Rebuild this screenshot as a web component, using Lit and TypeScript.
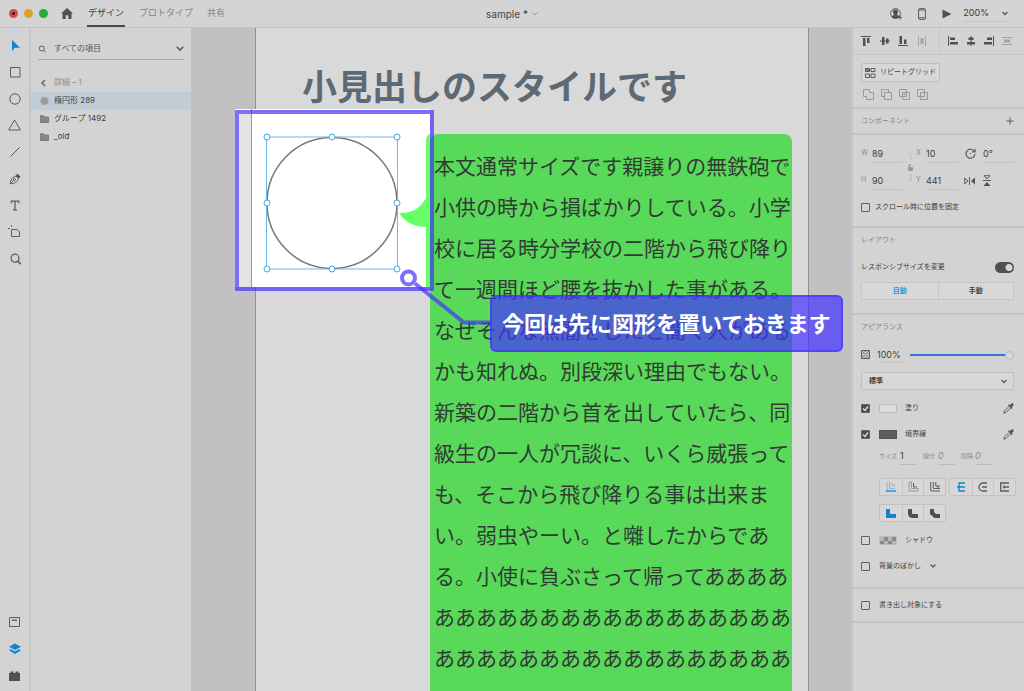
import { LitElement, html, svg, css } from "lit";
import { customElement, property, state } from "lit/decorators.js";
import { classMap } from "lit/directives/class-map.js";

const shared = css`
  :host, * { box-sizing: border-box; }
  button, input, select {
    font: inherit; color: inherit; background: none; border: 0;
    margin: 0; padding: 0; outline: 0; border-radius: 0; min-width: 0;
  }
  button { display: flex; align-items: center; justify-content: center; }
  svg { display: block; fill: none; stroke: #5c5c5c; stroke-width: 1; flex: none; overflow: visible; }
  .solid { fill: #505050; stroke: none; }
  .blue { stroke: #1682d0; }
  .bluefill { fill: #1380d0; stroke: none; }
  .pale { stroke: #999; }
`;

const icon = (w: number, h: number, body: unknown, cls = "") =>
  html`<svg class=${cls} width=${w} height=${h} viewBox="0 0 ${w} ${h}" aria-hidden="true">${body}</svg>`;

const chevron = icon(8, 5, svg`<path stroke-width="1.4" d="M1.500 1 4 3.500 6.500 1"/>`);

const tools: [string, unknown][] = [
  ["選択", icon(12, 12, svg`<path class="bluefill" d="M3 1v11l2.700-3.200H11z"/>`)],
  ["長方形", icon(12, 12, svg`<path d="M1.500 1.500h9.500v9.500H1.500z"/>`)],
  ["楕円形", icon(12, 12, svg`<circle cx="6" cy="6" r="5.200"/>`)],
  ["多角形", icon(13, 12, svg`<path d="M6.500 1 12.300 11H.700z"/>`)],
  ["線", icon(12, 12, svg`<path d="m1.500 10.500 9-9"/>`)],
  ["ペン", icon(12, 12, svg`<path d="M1.300 10.800C1.500 7 2.500 4.500 7 3l2.400 2.400C8.500 9 6 10.500 1.300 10.800l3.800-3.900"/><circle cx="5.500" cy="6.500" r="1"/><path class="solid" d="m6.800 2.300 1.600-1.500 3 3-1.600 1.600z"/>`)],
  ["テキスト", icon(10, 11, svg`<path stroke-width="1.200" d="M1.200 3.200V1.200h7.600v2M5 1.200v8.600M3 9.900h4"/>`)],
  ["アートボード", icon(13, 13, svg`<path d="M3.500 4.500H9l2.500 2.500v4.500h-8zM3.500 0v2M0 3.500h2"/>`)],
  ["ズーム", icon(12, 12, svg`<circle stroke-width="1.200" cx="6" cy="5.200" r="4"/><path stroke-width="1.600" d="m8.800 8.100 2.900 3"/>`)],
];

const docks: [string, unknown][] = [
  ["ライブラリ", icon(11, 10, svg`<path d="M.500.500h10v9H.500z"/><path stroke-width="1.400" d="M3 3.200h5"/>`)],
  ["レイヤー", icon(12, 12, svg`<path class="bluefill" d="m6 .500 6 3.300-6 3.300-6-3.300zM0 7.300l2-1.100 4 2.200 4-2.200 2 1.100-6 3.700z"/>`)],
  ["プラグイン", icon(11, 10, svg`<path class="solid" d="M0 2h1.500V.500h3V2h2V.500h3V2H11v8H0z"/>`)],
];

@customElement("tool-bar")
class ToolBar extends LitElement {
  static styles = [shared, css`
    :host { display: flex; flex-direction: column; justify-content: space-between; padding: 4px 0 2px; border-right: 2px solid #c6c6c6; background: #d3d3d3; }
    .group { display: grid; grid-auto-rows: 1fr; height: 240px; }
    .dock { height: 80px; }
    button { width: 100%; }
  `];
  render() {
    const draw = ([label, glyph]: [string, unknown]) => html`<button aria-label=${label}>${glyph}</button>`;
    return html`<div class="group">${tools.map(draw)}</div><div class="group dock">${docks.map(draw)}</div>`;
  }
}

@customElement("app-header")
class AppHeader extends LitElement {
  static styles = [shared, css`
    :host { display: grid; grid-template-columns: 1fr auto 1fr; align-items: center; height: 28px; padding: 0 9px; background: #d4d4d4; border-bottom: 1px solid #c1c1c1; font-size: 9px; }
    .side { display: flex; align-items: center; height: 27px; }
    .dot { width: 9px; height: 9px; border-radius: 50%; margin-right: 6px; }
    .red { background: radial-gradient(#4a0d0d 0 1px, #d84b4b 2px); }
    .amber { background: #daa328; }
    .green { background: #22ad38; }
    .home { margin: 0 14px 0 7px; }
    nav { display: flex; gap: 14px; align-self: stretch; }
    nav a { display: flex; align-items: center; color: #858585; text-decoration: none; border: solid transparent; border-width: 2px 0; }
    nav a.on { color: #3c3c3c; border-bottom-color: #4b4b4b; padding: 0 1px; }
    .title { display: flex; align-items: center; gap: 4px; color: #444; font-size: 10px; }
    .right { justify-content: flex-end; gap: 16px; padding-right: 6px; }
    .zoom { display: flex; gap: 12px; height: 16px; margin-left: -5px; border-bottom: 1px solid #c3c3c3; color: #3c3c3c; }
  `];
  render() {
    return html`
      <div class="side">
        <button class="dot red" aria-label="閉じる"></button>
        <button class="dot amber" aria-label="最小化"></button>
        <button class="dot green" aria-label="拡大"></button>
        <button class="home" aria-label="ホーム">${icon(12, 11, svg`<path class="solid" d="M6 0 12 5.500H10.500V11H7.300V7.200H4.700V11H1.500V5.500H0z"/>`)}</button>
        <nav>
          <a class="on" href="#design">デザイン</a><a href="#prototype">プロトタイプ</a><a href="#share">共有</a>
        </nav>
      </div>
      <div class="title">sample * ${icon(6, 4, svg`<path d="M.500.500 3 3 5.500.500"/>`, "pale")}</div>
      <div class="side right">
        <button aria-label="招待">${icon(12, 12, svg`<circle cx="5.500" cy="5.500" r="4.900"/><path class="solid" d="M5.500 1.500c3.200 0 2.900 3.500 1.500 4.700 0 1.200 1.800 1 2.500 2.200C7.500 11.300 3.500 11.300 1.500 8.700 2 7.300 4 7.500 4 6.200 2.600 5 2.300 1.500 5.500 1.500z"/><path stroke-width="1.200" d="M10 7.500v4M8 9.500h4"/>`)}</button>
        <button aria-label="デバイスでプレビュー">${icon(8, 12, svg`<rect x=".6" y=".6" width="6.800" height="10.800" rx="1"/><path d="M.500 2h7M.500 9.800h7"/>`)}</button>
        <button aria-label="再生">${icon(10, 10, svg`<path class="solid" d="M.500.500 9.500 5l-9 4.500z"/>`)}</button>
        <button class="zoom" aria-label="ズーム">200% ${chevron}</button>
      </div>`;
  }
}

@customElement("layer-list")
class LayerList extends LitElement {
  @state() private selected = 0;
  static styles = [shared, css`
    :host { display: block; background: #d3d3d3; font-size: 8px; color: #3f3f3f; }
    .search { display: grid; grid-template-columns: 16px 1fr 8px; align-items: center; height: 22px; margin: 10px 7px 14px; border-bottom: 1px solid #a9a9a9; color: #555; }
    .crumb, .layer { display: grid; grid-template-columns: 14px 1fr; align-items: center; justify-items: start; width: 100%; height: 18px; padding-left: 9px; text-align: left; }
    .crumb { color: #8d8d8d; }
    .on { background: #c0cdd6; }
  `];
  render() {
    const folder = icon(9, 8, svg`<path fill="#888" stroke="#666" stroke-width=".7" d="M.500.700h3l1 1.300h4v5.500h-8z"/>`);
    const layers: [string, unknown][] = [
      ["楕円形 289", icon(9, 8, svg`<circle cx="4.500" cy="4" r="3.800" fill="#999" stroke="#aaa"/>`)],
      ["グループ 1492", folder],
      ["_old", folder],
    ];
    return html`
      <label class="search">
        ${icon(8, 8, svg`<circle cx="3.800" cy="3.500" r="2.500"/><path d="m5.500 5.300 2 2"/>`)}
        <input type="text" aria-label="レイヤー検索" value="すべての項目" />
        ${icon(8, 5, svg`<path stroke-width="1.600" d="M.700.700 4 4 7.300.700"/>`)}
      </label>
      <button class="crumb">${icon(8, 8, svg`<path stroke-width="1.300" d="M5 1 2 4l3 3"/>`)}<span>詳細 – 1</span></button>
      ${layers.map(([name, glyph], i) => html`
        <button class=${classMap({ layer: true, on: this.selected === i })} @click=${() => (this.selected = i)}>${glyph}<span>${name}</span></button>`)}
    `;
  }
}

@customElement("design-canvas")
class DesignCanvas extends LitElement {
  static styles = [shared, css`
    :host { display: block; position: relative; overflow: hidden; background: #c1c1c1; }
    .artboard { height: 100%; margin: 0 42px 0 64px; background: #d9d9d9; border: solid #8f8f8f; border-width: 0 1px; }
    h1 { margin: 0; padding: 34px 0 0 46px; font-size: 35px; line-height: 50px; font-weight: 700; color: #5d6974; white-space: nowrap; }
    .bubble { margin: 22px 16px 0 174px; padding: 12px 0 40px 4px; border-radius: 8px; background: #59d959; }
    p { margin: 0; width: 358px; font-size: 21px; line-height: 41px; color: #303c33; white-space: normal; word-break: break-all; }
    .focus { position: absolute; left: 44px; top: 81px; }
    .leader { position: absolute; left: 208px; top: 240px; }
    .callout { position: absolute; left: 299px; top: 267px; padding: 1px 10px 0; border: 2px solid rgba(68, 50, 255, .6); border-radius: 6px; background: rgba(68, 50, 255, .7); color: #fff; font-size: 22px; line-height: 52px; font-weight: 700; white-space: nowrap; }
  `];
  render() {
    const handles = [[267, 137], [332, 137], [397, 137], [267, 203], [397, 203], [267, 269], [332, 269], [397, 269]];
    return html`
      <div class="artboard">
        <h1>小見出しのスタイルです</h1>
        <div class="bubble">
          <p>本文通常サイズです親譲りの無鉄砲で小供の時から損ばかりしている。小学校に居る時分学校の二階から飛び降りて一週間ほど腰を抜かした事がある。なぜそんな無闇をしたと聞く人があるかも知れぬ。別段深い理由でもない。新築の二階から首を出していたら、同級生の一人が冗談に、いくら威張っても、そこから飛び降りる事は出来まい。弱虫やーい。と囃したからである。小使に負ぶさって帰ってああああああああああああああああああああああああああああああああああああああ</p>
        </div>
      </div>
      <svg class="focus" width="199" height="182" viewBox="235 109 199 182" role="img" aria-label="選択中の楕円形">
        <path fill="#fff" stroke="none" d="M235 109h195v178H235z"/>
        <path fill="#e3e3e3" stroke="none" d="M239 114h12v173h-12z"/>
        <path stroke="#999" d="M251.500 109v178"/>
        <path fill="#66ff66" stroke="none" d="M430 134c-3 1-4 4-4 8v56c-6 11-14 15-27 15 6 9 15 14 27 14v60h4z"/>
        <ellipse cx="332" cy="203" rx="65" ry="65.500" stroke="#777" stroke-width="1.500"/>
        <path stroke="#6bb9e8" d="M266.500 137h131v132h-131z"/>
        ${handles.map(([x, y]) => svg`<circle cx=${x} cy=${y} r="3" fill="#fff" stroke="#45a9e4"/>`)}
        <path stroke="#4432ff" stroke-opacity=".7" stroke-width="4" d="M237 112h195v177H237z"/>
      </svg>
      <svg class="leader" width="92" height="60" viewBox="399 268 92 60" aria-hidden="true">
        <circle cx="408.500" cy="278" r="6.500" fill="#fff" stroke="#7c6fff" stroke-width="4"/>
        <path stroke="#4432ff" stroke-opacity=".7" stroke-width="4" d="m415 283.500 49 39h26"/>
      </svg>
      <div class="callout">今回は先に図形を置いておきます</div>`;
  }
}

const alignIcons: [string, string, boolean?][] = [
  ["上揃え", "M0 0h10v1H0zM2 2h2.500v8H2zM6 2h2.500v5H6z"],
  ["垂直中央", "M0 4.500h10v1H0zM2 1h2.500v8H2zM6 2.500h2.500v5H6z"],
  ["下揃え", "M0 9h10v1H0zM1.500 0H4v8H1.500zM6 3.500h2.500V8H6z"],
  ["水平分布", "M1 0h1v10H1zM8 0h1v10H8zM3.500 2h3v6h-3z", true],
  ["左揃え", "M0 0h1v10H0zM2 1.500h5V4H2zM2 6h8v2.500H2z"],
  ["水平中央", "M4.500 0h1v10h-1zM2.500 1.500h5V4h-5zM1 6h8v2.500H1z"],
  ["右揃え", "M9 0h1v10H9zM3 1.500h5V4H3zM0 6h8v2.500H0z"],
  ["垂直分布", "M0 1h10v1H0zM0 8h10v1H0zM2 3.500h6v3H2z", true],
];

@customElement("stroke-group")
class StrokeGroup extends LitElement {
  @property({ attribute: false }) items: [string, unknown][] = [];
  static styles = [shared, css`
    :host { display: grid; grid-template-columns: repeat(3, 1fr); height: 18px; border: 1px solid #c2c2c2; border-radius: 2px; width: 67px; background: #d7d7d7; }
    button + button { border-left: 1px solid #c6c6c6; }
  `];
  render() {
    return this.items.map(([label, glyph]) => html`<button aria-label=${label}>${glyph}</button>`);
  }
}

@customElement("inspector-panel")
class InspectorPanel extends LitElement {
  @state() private responsive = true;
  @state() private mode = 0;
  static styles = [shared, css`
    :host { display: block; background: #d3d3d3; border-left: 2px solid #c5c5c5; font-size: 7px; color: #3e3e3e; overflow: hidden; }
    section { padding: 0 10px 0 8px; border-bottom: 2px solid #c4c4c4; }
    h2 { margin: 0; font-size: 7px; font-weight: 400; line-height: 24px; color: #858585; }
    section.aligns { display: grid; grid-template-columns: 1fr 1fr; height: 27px; padding: 0; border-bottom-width: 1px; }
    .aligns div { display: flex; align-items: center; justify-content: space-between; padding: 0 12px 0 8px; }
    .aligns div + div { border-left: 1px solid #c6c6c6; }
    .faint .solid { fill: #a4a4a4; }
    section.repeat { padding-top: 8px; height: 54px; }
    .repeat > button { height: 19px; padding: 0 3px; gap: 5px; border: 1px solid #bfbfbf; border-radius: 2px; background: #d7d7d7; }
    .bools { display: flex; gap: 7px; margin: 7px 0 0 2px; }
    .component { display: flex; justify-content: space-between; align-items: center; height: 26px; }
    section.transform { height: 93px; padding-top: 5px; }
    .fields { display: grid; grid-template-columns: 11px 31px 13px 10px 32px 25px 31px; grid-auto-rows: 27px; align-items: center; font-size: 9px; }
    .fields label { font-size: 7px; color: #8a8a8a; }
    .fields input { width: 100%; height: 18px; border-bottom: 1px solid #c3c3c3; }
    .fields .pic { justify-self: center; }
    .fields .link { grid-row: 1 / 3; grid-column: 3; justify-self: center; }
    .flips { display: flex; gap: 8px; grid-column: 6 / 8; padding-left: 6px; }
    .check { display: flex; align-items: center; gap: 5px; height: 26px; }
    .check.wide { gap: 9px; }
    input[type="checkbox"] { appearance: none; width: 9px; height: 9px; border: 1px solid #606060; border-radius: 1px; flex: none; }
    input[type="checkbox"]:checked { background: #4c4c4c url("data:image/svg+xml,%3Csvg xmlns='http://www.w3.org/2000/svg' viewBox='0 0 7 7'%3E%3Cpath d='M1 3.500 3 5.500 6 1.500' fill='none' stroke='%23ddd' stroke-width='1.300'/%3E%3C/svg%3E"); }
    .layout { height: 87px; }
    .line { display: flex; align-items: center; justify-content: space-between; height: 30px; }
    input.switch { width: 19px; height: 11px; border: 0; border-radius: 6px; background: radial-gradient(circle at 5px 50%, #d6d6d6 0 4px, #888 4px); }
    input.switch[type="checkbox"]:checked { background: radial-gradient(circle at 14px 50%, #d6d6d6 0 3px, #505050 4px); border-radius: 6px; }
    .segments { display: grid; grid-template-columns: 1fr 1fr; height: 18px; border: 1px solid #c5c5c5; background: #d8d8d8; font-weight: 700; }
    .segments button + button { border-left: 1px solid #c5c5c5; }
    .segments .on { color: #2a98cf; }
    .looks { height: 274px; }
    .opacity { display: grid; grid-template-columns: 16px 33px 1fr; align-items: center; height: 31px; font-size: 9px; }
    .opacity .value { width: 27px; height: 17px; border-bottom: 1px solid #c8c8c8; }
    input[type="range"] { appearance: none; width: 100%; height: 10px; }
    input[type="range"]::-webkit-slider-runnable-track { height: 2px; background: #2f76d8; }
    input[type="range"]::-webkit-slider-thumb { appearance: none; width: 9px; height: 9px; margin-top: -3px; border-radius: 50%; border: 1px solid #bbb; background: #d8d8d8; }
    .blend { display: grid; align-items: center; margin: 2px 0 5px; height: 18px; border: 1px solid #c0c0c0; border-radius: 2px; background: #d7d7d7; }
    .blend > * { grid-area: 1 / 1; }
    .blend select { appearance: none; width: 100%; height: 16px; padding-left: 7px; font-weight: 700; }
    .blend svg { justify-self: end; margin-right: 5px; pointer-events: none; }
    .paint { display: grid; grid-template-columns: 18px 26px 1fr auto; align-items: center; height: 26px; }
    .swatch { width: 18px; height: 9px; border: 1px solid #bdbdbd; background: #dcdcdc; }
    .swatch.dark { background: #5d5d5d; border-color: #555; }
    .swatch.alpha { background: repeating-conic-gradient(#8a8a8a 0 25%, #b5b5b5 0 50%) 0 0 / 8px 8px; }
    .sizes { display: grid; grid-template-columns: 21px 23px 15px 23px 14px 19px; align-items: center; height: 18px; margin-left: 18px; font-size: 6px; color: #8c8c8c; }
    .sizes input { width: 17px; height: 18px; font-size: 9px; font-style: italic; border-bottom: 1px solid #bcbcbc; }
    .sizes input.set { font-style: normal; color: #3e3e3e; }
    .groups { display: flex; flex-wrap: wrap; gap: 8px 3px; margin: 13px -2px 5px 18px; }
    section.export { height: 34px; padding-top: 3px; }
  `];
  render() {
    const align = ([label, d, faint]: [string, string, boolean?]) =>
      html`<button aria-label=${label} class=${classMap({ faint: !!faint })}>${icon(10, 10, svg`<path class="solid" d=${d}/>`)}</button>`;
    const bools = [
      "M.500.500h6v3h4v7h-7v-3h-3z",
      "M3.500 7.500h-3v-7h7v3M3.500 3.500h7v7h-7z",
      "M.500.500h7v7h-7zM3.500 3.500h7v7h-7zM5 5h1v1H5z",
      "M.500.500h7v7h-7zM3.500 3.500h7v7h-7z",
    ];
    const dropper = icon(11, 11, svg`<path d="M6 3.500 1.500 8 .800 10.200 3 9.500 7.500 5"/><path class="solid" d="m5 2.300 1-1 1 .9L8.500.600c1.200-1 2.900.700 1.900 1.900L8.800 4l.9 1-1 1z"/>`);
    const place: [string, unknown][] = [
      ["内側", icon(10, 10, svg`<path stroke="#86b8da" d="M1 0v9M3.500 0v6.500H9M5 2h2v2h2"/><path stroke-width="1.300" d="M0 9h10"/>`, "blue")],
      ["中央", icon(10, 10, svg`<path class="pale" d="M1 0v9h9V6.500H3.500V0z"/><path d="M5.500 1v4H9"/>`)],
      ["外側", icon(10, 10, svg`<path d="M.800 0v9H10M3.300 0v6.500H10M5.800 0v4H10M8 4v3"/>`)],
    ];
    const caps: [string, unknown][] = [
      ["線端なし", icon(8, 10, svg`<path stroke-width="1.300" d="M8 1H2v8h6M0 5h8"/>`, "blue")],
      ["丸型線端", icon(9, 10, svg`<path stroke-width="1.300" d="M9 1H5a4 4 0 0 0 0 8h4M4 5h5"/>`)],
      ["突出線端", icon(9, 10, svg`<path stroke-width="1.300" d="M9 1H.700v8H9M3 5h6M4 3.500v3"/>`)],
    ];
    const joins: [string, unknown][] = [
      ["マイター結合", icon(10, 9, svg`<path class="bluefill" d="M0 0h4v5h6v4H0z"/>`)],
      ["ラウンド結合", icon(10, 9, svg`<path class="solid" d="M0 0h4v4q0 1 1 1h5v4H5Q0 9 0 4z"/>`)],
      ["ベベル結合", icon(10, 9, svg`<path class="solid" d="M0 0h4v3l2 2h4v4H4.500L0 5z"/>`)],
    ];
    return html`
      <section class="aligns"><div>${alignIcons.slice(0, 4).map(align)}</div><div>${alignIcons.slice(4).map(align)}</div></section>
      <section class="repeat">
        <button>${icon(10, 10, svg`<path fill="#777" d="M.500.500h4v3h-4z"/><path d="M6 .500h4v3H6zM.500 6h4v3.500h-4zM6 6h4v3.500H6z"/>`)}リピートグリッド</button>
        <div class="bools">${bools.map((d, i) => html`<button aria-label="パス操作 ${i + 1}">${icon(11, 11, svg`<path class="pale" d=${d}/>`)}</button>`)}</div>
      </section>
      <section class="component"><h2>コンポーネント</h2><button aria-label="追加">${icon(8, 8, svg`<path d="M4 .500v7M.500 4h7"/>`)}</button></section>
      <section class="transform">
        <div class="fields">
          <label for="w">W</label><input id="w" value="89" />
          <button class="link" aria-label="縦横比を固定">${icon(6, 28, svg`<path stroke="#bcbcbc" d="M1 .500h3V7M1 27.500h3V21"/><path fill="#999" stroke="#999" d="M1.500 14.500h4v3h-4zM2 14v-2h2"/>`)}</button>
          <label for="x">X</label><input id="x" value="10" />
          <label class="pic" for="r">${icon(11, 11, svg`<path stroke-width="1.200" d="M9.300 3.300A4.500 4.500 0 1 0 10 6M10 .800v3H7"/><path d="M5 5.500h1"/>`)}</label><input id="r" value="0°" aria-label="回転" />
          <label for="h">H</label><input id="h" value="90" />
          <label for="y">Y</label><input id="y" value="441" />
          <div class="flips">
            <button aria-label="水平に反転">${icon(11, 8, svg`<path d="M.700 1 4 4 .700 7zM5.500 0v8"/><path class="solid" d="M11 .500v7L7 4z"/>`)}</button>
            <button aria-label="垂直に反転">${icon(8, 11, svg`<path d="M1 .700 4 4 7 .700zM0 5.500h8"/><path class="solid" d="M.500 11h7L4 7z"/>`)}</button>
          </div>
        </div>
        <label class="check"><input type="checkbox" />スクロール時に位置を固定</label>
      </section>
      <section class="layout">
        <h2>レイアウト</h2>
        <label class="line">レスポンシブサイズを変更
          <input class="switch" type="checkbox" role="switch" .checked=${this.responsive} @change=${() => (this.responsive = !this.responsive)} />
        </label>
        <div class="segments">${["自動", "手動"].map((t, i) => html`<button class=${classMap({ on: this.mode === i })} @click=${() => (this.mode = i)}>${t}</button>`)}</div>
      </section>
      <section class="looks">
        <h2>アピアランス</h2>
        <div class="opacity">
          ${icon(9, 9, svg`<path d="M.500.500h8v8h-8z"/><path stroke-width=".6" d="m1 1 7 7M8 1 1 8M4.500 1 8 4.500 4.500 8 1 4.500z"/>`)}
          <input class="value" value="100%" aria-label="不透明度" />
          <input type="range" value="100" aria-label="不透明度スライダー" />
        </div>
        <div class="blend"><select aria-label="描画モード"><option>標準</option></select>${chevron}</div>
        <div class="paint"><input id="fill" type="checkbox" checked /><button class="swatch" aria-label="塗りの色"></button><label for="fill">塗り</label><button aria-label="塗りの色を抽出">${dropper}</button></div>
        <div class="paint"><input id="line" type="checkbox" checked /><button class="swatch dark" aria-label="境界線の色"></button><label for="line">境界線</label><button aria-label="線の色を抽出">${dropper}</button></div>
        <div class="sizes">
          <label for="s1">サイズ</label><input id="s1" class="set" value="1" />
          <label for="s2">線分</label><input id="s2" value="0" />
          <label for="s3">間隔</label><input id="s3" value="0" />
        </div>
        <div class="groups">
          <stroke-group .items=${place}></stroke-group><stroke-group .items=${caps}></stroke-group><stroke-group .items=${joins}></stroke-group>
        </div>
        <div class="paint"><input id="shadow" type="checkbox" /><button class="swatch alpha" aria-label="シャドウの色"></button><label for="shadow">シャドウ</label></div>
        <label class="check wide"><input type="checkbox" />背景のぼかし ${icon(6, 4, svg`<path stroke-width="1.300" d="M.500.500 3 3 5.500.500"/>`)}</label>
      </section>
      <section class="export"><label class="check wide"><input type="checkbox" />書き出し対象にする</label></section>`;
  }
}

@customElement("app-root")
class AppRoot extends LitElement {
  static styles = css`
    :host { display: grid; grid-template-rows: auto 1fr; height: 100vh; overflow: hidden; font-family: Inter, "Noto Sans CJK JP", sans-serif; font-weight: 400; line-height: 1.2; }
    main { display: grid; grid-template-columns: 31px 160px minmax(0, 1fr) 173px; min-height: 0; }
    main > * { min-height: 0; }
  `;
  render() {
    return html`
      <app-header></app-header>
      <main lang="ja"><tool-bar></tool-bar><layer-list></layer-list><design-canvas></design-canvas><inspector-panel></inspector-panel></main>`;
  }
}
